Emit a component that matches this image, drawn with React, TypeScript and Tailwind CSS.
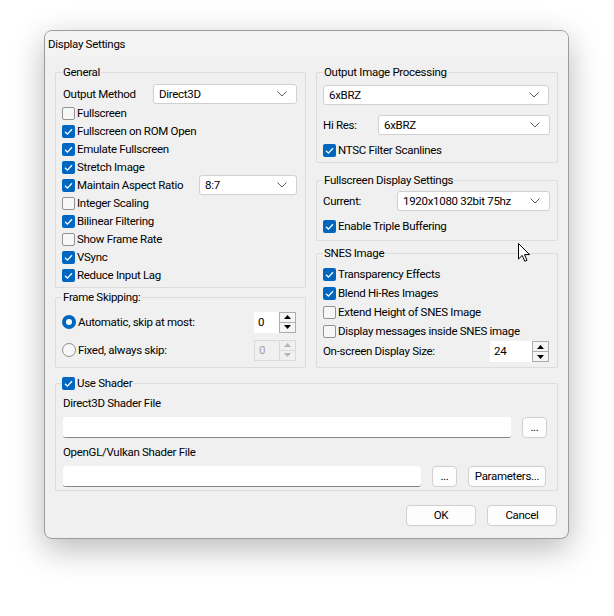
import React from 'react';

const Chevron = () => (
  <svg width="10" height="6" viewBox="0 0 10 6" className="shrink-0">
    <path d="M0.5 0.5 L5 5 L9.5 0.5" fill="none" stroke="#5f5f5f" strokeWidth="1" />
  </svg>
);

const Combo = ({ value, className = '' }: { value: string; className?: string }) => (
  <div
    className={`flex h-[20px] items-center justify-between rounded-[3px] border border-[#d0d0d0] bg-white pl-[5px] pr-[9px] ${className}`}
  >
    <span>{value}</span>
    <Chevron />
  </div>
);

const Check = ({ checked, label, className = '' }: { checked?: boolean; label: string; className?: string }) => (
  <div className={`flex items-center gap-[2px] ${className}`}>
    {checked ? (
      <span className="flex h-[13px] w-[13px] shrink-0 items-center justify-center rounded-[2px] bg-[#0067c0]">
        <svg width="13" height="13" viewBox="0 0 13 13">
          <path d="M3 6.8 L5.4 9.1 L10 4.2" fill="none" stroke="#fff" strokeWidth="1.3" />
        </svg>
      </span>
    ) : (
      <span className="h-[13px] w-[13px] shrink-0 rounded-[2px] border border-[#939393] bg-[#f7f7f7]" />
    )}
    <span className="whitespace-nowrap">{label}</span>
  </div>
);

const Radio = ({ checked, label }: { checked?: boolean; label: string }) => (
  <div className="flex items-center gap-[2px]">
    {checked ? (
      <span className="flex h-[14px] w-[14px] shrink-0 items-center justify-center rounded-full bg-[#0067c0]">
        <span className="h-[6px] w-[6px] rounded-full bg-white" />
      </span>
    ) : (
      <span className="h-[14px] w-[14px] shrink-0 rounded-full border border-[#8f8f8f] bg-[#f7f7f7]" />
    )}
    <span className="whitespace-nowrap">{label}</span>
  </div>
);

const Arrow = ({ up, disabled }: { up?: boolean; disabled?: boolean }) => (
  <div
    className={`flex flex-1 items-center justify-center border ${
      disabled ? 'border-[#d9d9d9] bg-[#f0f0f0]' : 'border-[#adadad] bg-[#f5f5f5]'
    } ${up ? '' : 'border-t-0'}`}
  >
    <svg width="7" height="4" viewBox="0 0 7 4">
      <polygon points={up ? '0,4 3.5,0 7,4' : '0,0 3.5,4 7,0'} fill={disabled ? '#b5b5b5' : '#000'} />
    </svg>
  </div>
);

const Spin = ({ value, disabled, inputWidth }: { value: string; disabled?: boolean; inputWidth: string }) => (
  <div className="flex h-[21px]">
    <div
      className={`flex items-center pl-[4px] ${inputWidth} ${
        disabled ? 'border border-r-0 border-[#d9d9d9] text-[#a0a0a0]' : 'bg-white'
      }`}
    >
      {value}
    </div>
    <div className="flex w-[17px] flex-col">
      <Arrow up disabled={disabled} />
      <Arrow disabled={disabled} />
    </div>
  </div>
);

const Group = ({
  title,
  children,
  className = '',
}: {
  title: React.ReactNode;
  children: React.ReactNode;
  className?: string;
}) => (
  <fieldset className={`rounded-[2px] border border-[#dcdcdc] px-[6px] ${className}`}>
    <legend className="px-[1px] leading-[15px]">{title}</legend>
    {children}
  </fieldset>
);

const TextBox = ({ className = '' }: { className?: string }) => (
  <div className={`h-[21px] rounded-[3px] border-b border-b-[#868686] bg-white ${className}`} />
);

const Btn = ({ label, className = '' }: { label: string; className?: string }) => (
  <div
    className={`flex h-[21px] items-center justify-center rounded-[4px] border border-[#d0d0d0] bg-[#fdfdfd] ${className}`}
  >
    {label}
  </div>
);

export default function App() {
  return (
    <div className="relative h-[616px] w-[614px] bg-white pl-[44px] pt-[30px] font-['Roboto','Liberation_Sans',sans-serif] text-[11.5px] leading-[15px] tracking-[-0.3px] text-black">
      <div className="flex h-[509px] w-[525px] flex-col overflow-hidden rounded-[8px] border border-[#9c9c9c] bg-[#f0f0f0] shadow-[0_10px_32px_rgba(0,0,0,0.28)]">
        {/* Title bar */}
        <div className="flex h-[25px] shrink-0 items-center bg-[#f3f3f3] pl-[3px] pt-[2px]">Display Settings</div>

        {/* Body */}
        <div className="flex flex-1 flex-col px-[10px] pt-[9px]">
          <div className="grid grid-cols-[251px_242px] gap-x-[10px]">
            {/* Left column */}
            <div className="flex flex-col">
              <Group title="General" className="pb-[3px]">
                <div className="mt-[4px] flex h-[20px] items-center justify-between pr-[2px]">
                  <span className="pl-[1px]">Output Method</span>
                  <Combo value="Direct3D" className="w-[144px]" />
                </div>
                <div className="flex h-[18px] items-center">
                  <Check label="Fullscreen" />
                </div>
                <div className="flex h-[18px] items-center">
                  <Check checked label="Fullscreen on ROM Open" />
                </div>
                <div className="flex h-[18px] items-center">
                  <Check checked label="Emulate Fullscreen" />
                </div>
                <div className="flex h-[18px] items-center">
                  <Check checked label="Stretch Image" />
                </div>
                <div className="flex h-[18px] items-center justify-between pr-[2px]">
                  <Check checked label="Maintain Aspect Ratio" />
                  <Combo value="8:7" className="w-[98px]" />
                </div>
                <div className="flex h-[18px] items-center">
                  <Check label="Integer Scaling" />
                </div>
                <div className="flex h-[18px] items-center">
                  <Check checked label="Bilinear Filtering" />
                </div>
                <div className="flex h-[18px] items-center">
                  <Check label="Show Frame Rate" />
                </div>
                <div className="flex h-[18px] items-center">
                  <Check checked label="VSync" />
                </div>
                <div className="flex h-[18px] items-center">
                  <Check checked label="Reduce Input Lag" />
                </div>
              </Group>

              <Group title="Frame Skipping:" className="mt-[2px] pb-[6px]">
                <div className="mt-[6px] flex h-[22px] items-center justify-between pr-[3px]">
                  <Radio checked label="Automatic, skip at most:" />
                  <Spin value="0" inputWidth="w-[25px]" />
                </div>
                <div className="mt-[6px] flex h-[22px] items-center justify-between pr-[3px]">
                  <Radio label="Fixed, always skip:" />
                  <Spin value="0" disabled inputWidth="w-[25px]" />
                </div>
              </Group>
            </div>

            {/* Right column */}
            <div className="flex flex-col">
              <Group title="Output Image Processing" className="pb-[3px]">
                <Combo value="6xBRZ" className="mt-[5px] w-[226px]" />
                <div className="mt-[10px] flex h-[20px] items-center justify-between pr-[1px]">
                  <span>Hi Res:</span>
                  <Combo value="6xBRZ" className="w-[172px]" />
                </div>
                <div className="mt-[6px] flex h-[18px] items-center">
                  <Check checked label="NTSC Filter Scanlines" />
                </div>
              </Group>

              <Group title="Fullscreen Display Settings" className="mt-[10px] pb-[5px]">
                <div className="mt-[3px] flex h-[20px] items-center justify-between pr-[1px]">
                  <span>Current:</span>
                  <Combo value="1920x1080 32bit 75hz" className="w-[153px]" />
                </div>
                <div className="mt-[6px] flex h-[18px] items-center">
                  <Check checked label="Enable Triple Buffering" />
                </div>
              </Group>

              <Group title="SNES Image" className="mt-[5px] pb-[5px]">
                <div className="mt-[4px] flex h-[19px] items-center">
                  <Check checked label="Transparency Effects" />
                </div>
                <div className="flex h-[19px] items-center">
                  <Check checked label="Blend Hi-Res Images" />
                </div>
                <div className="flex h-[19px] items-center">
                  <Check label="Extend Height of SNES Image" />
                </div>
                <div className="flex h-[19px] items-center">
                  <Check label="Display messages inside SNES image" />
                </div>
                <div className="flex h-[21px] items-center justify-between pr-[2px]">
                  <span>On-screen Display Size:</span>
                  <Spin value="24" inputWidth="w-[42px]" />
                </div>
              </Group>
            </div>
          </div>

          {/* Shader */}
          <Group
            title={
              <span className="ml-[-1px] flex items-center">
                <Check checked label="Use Shader" />
              </span>
            }
            className="mt-[8px] pb-[3px]"
          >
            <div className="mt-[5px] pl-[1px]">Direct3D Shader File</div>
            <div className="mt-[6px] flex items-center gap-[11px] pl-[1px]">
              <TextBox className="w-[448px]" />
              <Btn label="..." className="w-[25px]" />
            </div>
            <div className="mt-[7px] pl-[1px]">OpenGL/Vulkan Shader File</div>
            <div className="mt-[6px] flex items-center gap-[11px] pl-[1px]">
              <TextBox className="w-[358px]" />
              <Btn label="..." className="w-[25px]" />
              <Btn label="Parameters..." className="w-[78px]" />
            </div>
          </Group>

          {/* Buttons */}
          <div className="mt-[14px] flex justify-end gap-[11px] pr-[1px]">
            <Btn label="OK" className="w-[70px] border-[#0067c0]" />
            <Btn label="Cancel" className="w-[70px]" />
          </div>
        </div>
      </div>

      {/* Mouse pointer */}
      <svg className="absolute left-[518px] top-[243px]" width="13" height="20" viewBox="0 0 13 20">
        <path
          d="M0.5 0.5 L0.5 16 L4.2 12.4 L6.8 18.3 L9 17.3 L6.5 11.6 L11.6 11.6 Z"
          fill="#fff"
          stroke="#000"
          strokeWidth="1"
          strokeLinejoin="round"
        />
      </svg>
    </div>
  );
}
